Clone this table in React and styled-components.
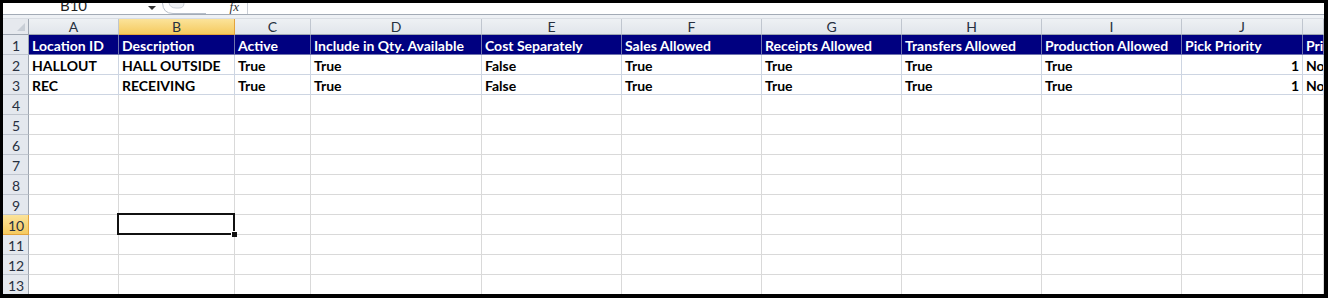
import React from 'react'
import styled, { createGlobalStyle } from 'styled-components'

const GlobalStyle = createGlobalStyle`
  html, body {
    margin: 0;
    padding: 0;
    background: #000;
  }
  body {
    font-family: Lato, "Liberation Sans", sans-serif;
  }
`

const Frame = styled.div`
  width: 1328px;
  height: 298px;
  box-sizing: border-box;
  border-style: solid;
  border-color: #000;
  border-width: 3px 4px 4px 3px;
  background: #fff;
  overflow: hidden;
  display: flex;
  flex-direction: column;
`

const FormulaBar = styled.div`
  height: 11px;
  flex: none;
  display: flex;
  align-items: flex-end;
  background: #fff;
  border-bottom: 1px solid #a3abb6;
  overflow: hidden;
`

const NameBox = styled.div`
  width: 155px;
  height: 11px;
  flex: none;
  position: relative;
  font-size: 15px;
  color: #1e1e1e;
  text-align: center;
  line-height: 15px;
  overflow: hidden;

  span {
    display: block;
    margin-top: -5px;
    padding-right: 14px;
  }
`

const Caret = styled.i`
  position: absolute;
  right: 2px;
  top: 3px;
  width: 0;
  height: 0;
  border-left: 4px solid transparent;
  border-right: 4px solid transparent;
  border-top: 4px solid #333;
`

const Fx = styled.div`
  width: 90px;
  flex: none;
  height: 11px;
  display: flex;
  align-items: flex-end;
  justify-content: space-between;
  border-right: 1px solid #c9ced6;
  box-sizing: border-box;
  padding: 0 8px 0 4px;

  em {
    font-family: "Liberation Serif", serif;
    font-size: 13px;
    line-height: 11px;
    color: #333;
    margin-bottom: 2px;
  }
`

const Spacer = styled.div`
  height: 3px;
  flex: none;
  background: #eef1f5;
  border-bottom: 1px solid #d9dde3;
`

const Sheet = styled.div`
  display: grid;
  grid-template-columns: 26px 90px 116px 76px 171px 140px 140px 140px 140px 140px 121px 1fr;
  grid-template-rows: 16px;
  grid-auto-rows: 20px;
`

const Corner = styled.div`
  background: #e6e9ee;
  border-right: 1px solid #9ea6b1;
  border-bottom: 1px solid #9ea6b1;
  position: relative;

  &::after {
    content: '';
    position: absolute;
    right: 3px;
    bottom: 3px;
    border-left: 8px solid transparent;
    border-bottom: 8px solid #c8ced6;
  }
`

const ColHead = styled.div`
  box-sizing: border-box;
  border-right: 1px solid ${p => (p.$active ? '#e3a33c' : '#c0c6cf')};
  border-bottom: 1px solid ${p => (p.$active ? '#e3a33c' : '#9ea6b1')};
  background: ${p =>
    p.$active
      ? 'linear-gradient(#fbe39a, #f5ca5f)'
      : 'linear-gradient(#eef1f4, #e1e5eb)'};
  color: #27303f;
  font-size: 14px;
  line-height: 16px;
  text-align: center;
`

const RowHead = styled.div`
  box-sizing: border-box;
  border-right: 1px solid ${p => (p.$active ? '#e3a33c' : '#9ea6b1')};
  border-bottom: 1px solid ${p => (p.$active ? '#e3a33c' : '#c0c6cf')};
  background: ${p =>
    p.$active
      ? 'linear-gradient(#fbe39a, #f5ca5f)'
      : '#e4e8ee'};
  color: #27303f;
  font-size: 14px;
  line-height: 21px;
  padding-left: ${p => (p.$wide ? 5 : 9)}px;
`

const Cell = styled.div`
  box-sizing: border-box;
  border-right: 1px solid ${p => p.$line};
  border-bottom: 1px solid ${p => p.$line};
  background: ${p => (p.$head ? '#000080' : '#fff')};
  color: ${p => (p.$head ? '#fff' : '#000')};
  font-weight: 700;
  font-size: 14px;
  line-height: 21px;
  padding: 0 3px;
  white-space: nowrap;
  overflow: hidden;
  text-align: ${p => (p.$num ? 'right' : 'left')};
`

const Picked = styled.div`
  box-sizing: border-box;
  border-right: 1px solid #d9d9d9;
  border-bottom: 1px solid #d9d9d9;
  position: relative;

  &::before {
    content: '';
    position: absolute;
    left: -2px;
    top: -2px;
    right: -1px;
    bottom: -1px;
    border: 2px solid #111;
    z-index: 2;
  }

  &::after {
    content: '';
    position: absolute;
    right: -3px;
    bottom: -3px;
    width: 5px;
    height: 5px;
    background: #111;
    border-left: 1px solid #fff;
    border-top: 1px solid #fff;
    z-index: 3;
  }
`

const letters = ['A', 'B', 'C', 'D', 'E', 'F', 'G', 'H', 'I', 'J', '']

const header = [
  'Location ID',
  'Description',
  'Active',
  'Include in Qty. Available',
  'Cost Separately',
  'Sales Allowed',
  'Receipts Allowed',
  'Transfers Allowed',
  'Production Allowed',
  'Pick Priority',
  'Primary',
]

const records = [
  ['HALLOUT', 'HALL OUTSIDE', 'True', 'True', 'False', 'True', 'True', 'True', 'True', '1', 'No'],
  ['REC', 'RECEIVING', 'True', 'True', 'False', 'True', 'True', 'True', 'True', '1', 'No'],
]

// rounded splitter handle between the name box and the fx button
function Splitter() {
  return (
    <svg width="44" height="11" viewBox="0 0 44 11">
      <path d="M0.5 0 Q1 10.5 11 10.5 L44 10.5" fill="none" stroke="#b6bec9" />
      <path d="M7 0 Q8 5 14 5 L17 5 Q22 5 22 0" fill="#eef0f3" stroke="#c9ced6" />
    </svg>
  )
}

export default function App() {
  const rows = []

  rows.push(<RowHead key="r1">1</RowHead>)
  header.forEach((h, i) => {
    rows.push(<Cell key={'h' + i} $head $line="#6f74ad">{h}</Cell>)
  })

  records.forEach((rec, r) => {
    rows.push(<RowHead key={'rh' + r}>{r + 2}</RowHead>)
    rec.forEach((v, i) => {
      rows.push(
        <Cell key={r + '-' + i} $line="#cdd5e2" $num={i === 9}>
          {v}
        </Cell>
      )
    })
  })

  for (let n = 4; n <= 13; n++) {
    rows.push(
      <RowHead key={'rh' + n} $active={n === 10} $wide={n > 9}>
        {n}
      </RowHead>
    )
    letters.forEach((l, i) =>
      n === 10 && l === 'B' ? (
        rows.push(<Picked key={n + '-' + i} />)
      ) : (
        rows.push(<Cell key={n + '-' + i} $line="#d9d9d9" />)
      )
    )
  }

  return (
    <>
      <GlobalStyle />
      <Frame>
        <FormulaBar>
          <NameBox>
            <span>B10</span>
            <Caret />
          </NameBox>
          <Fx>
            <Splitter />
            <em>fx</em>
          </Fx>
        </FormulaBar>
        <Spacer />
        <Sheet>
          <Corner />
          {letters.map((l, i) => (
            <ColHead key={i} $active={l === 'B'}>{l}</ColHead>
          ))}
          {rows}
        </Sheet>
      </Frame>
    </>
  )
}
